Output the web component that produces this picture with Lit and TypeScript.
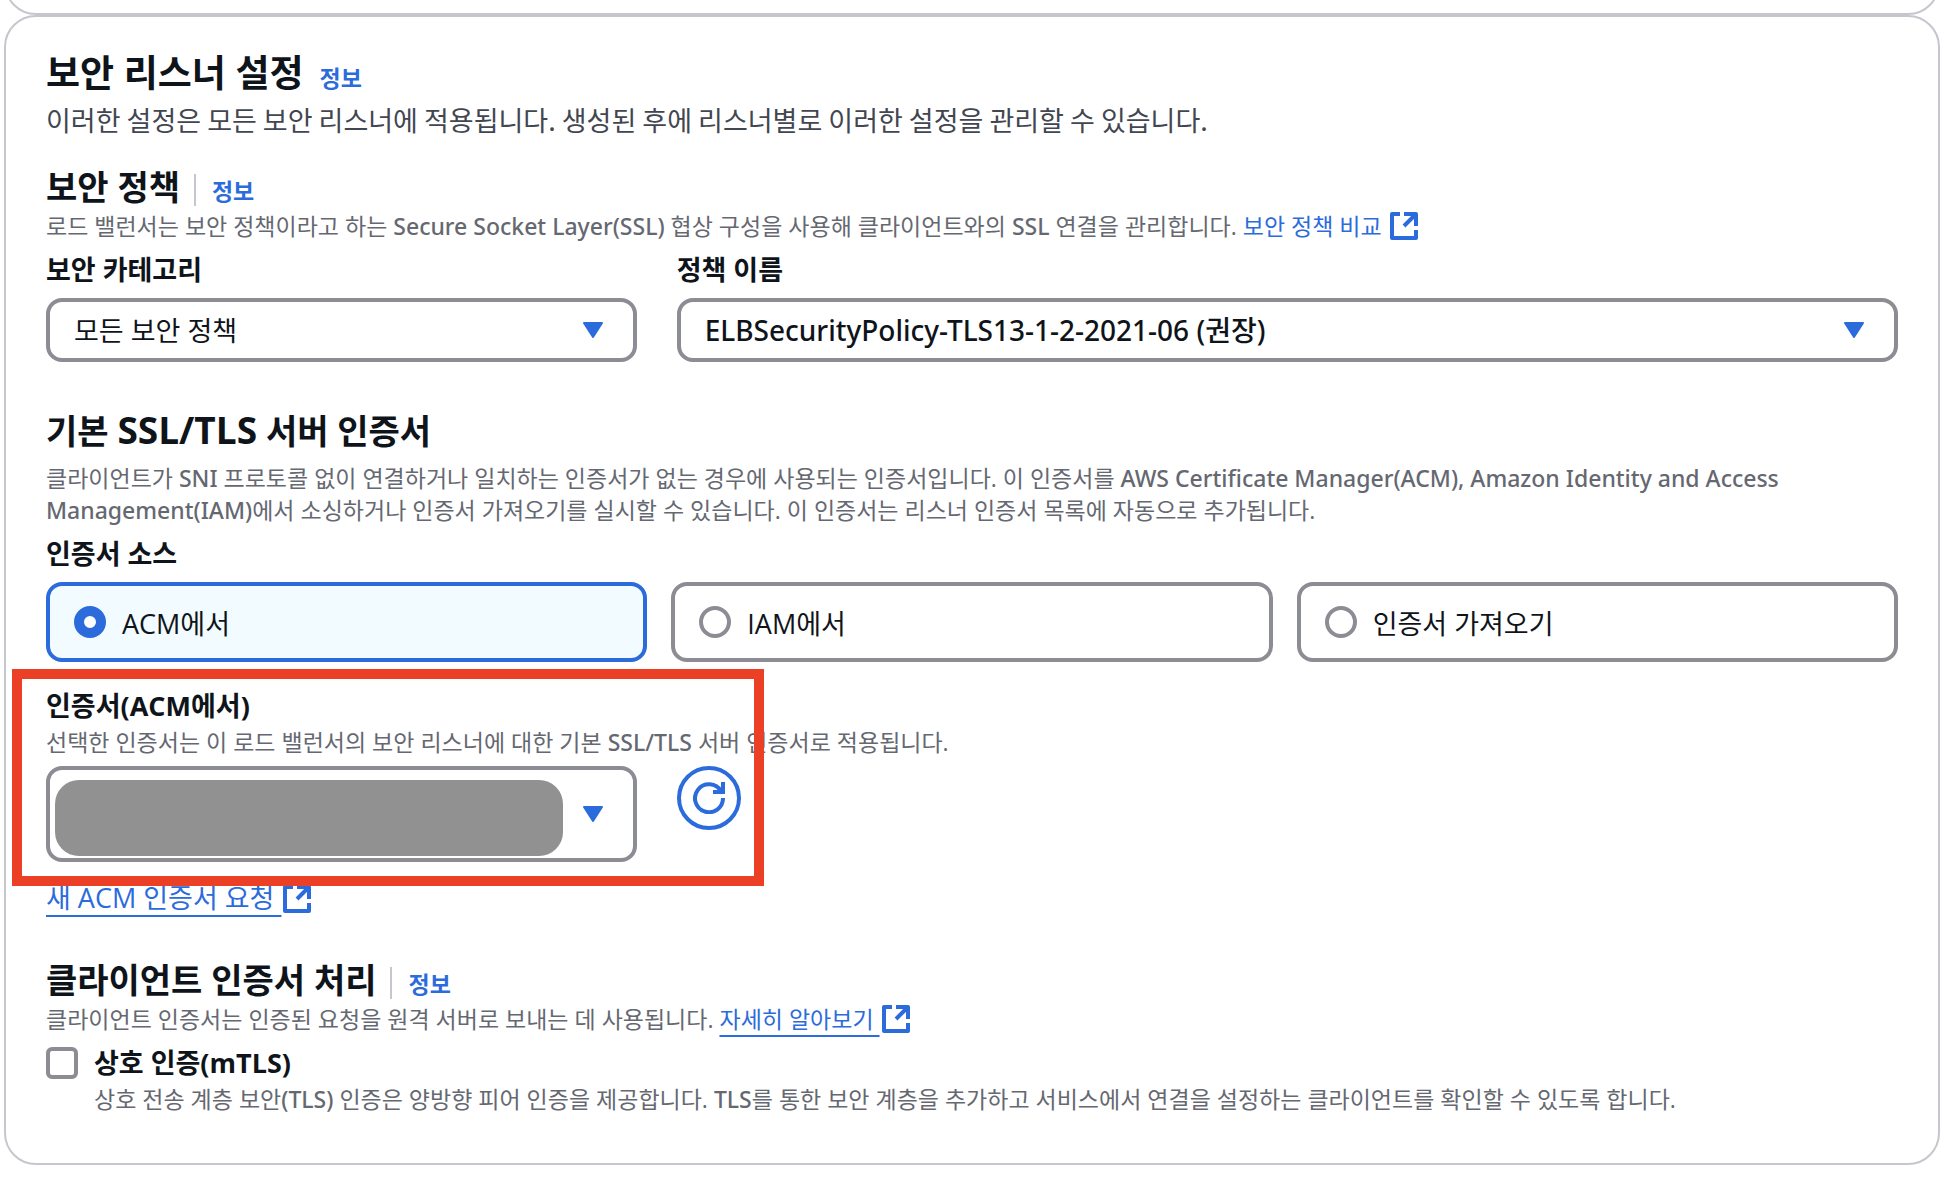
import { LitElement, html, css, svg } from "lit";
import { customElement, property, state } from "lit/decorators.js";

const caretIcon = html`<svg class="caret" width="20" height="16" viewBox="0 0 20 16" aria-hidden="true">
  ${svg`<path d="M1 1H19L10 15Z" fill="currentColor" stroke="currentColor" stroke-width="2" stroke-linejoin="round" />`}
</svg>`;

const externalIcon = html`<svg class="external" width="28" height="28" viewBox="0 0 28 28" aria-hidden="true">
  ${svg`<path d="M10 2H2V26H26V18M14 2H26V14M25 3L14 14" fill="none" stroke="currentColor" stroke-width="4" stroke-linejoin="round" />`}
</svg>`;

const refreshIcon = html`<svg width="32" height="32" viewBox="0 0 32 32" aria-hidden="true">
  ${svg`<path d="M30 16A14 14 0 1 1 28 9M30 0V10H20" fill="none" stroke="currentColor" stroke-width="4" />`}
</svg>`;

const shared = css`
  *,
  *::before {
    box-sizing: border-box;
  }
  a {
    color: #2c6bdb;
    text-decoration: none;
  }
`;

@customElement("section-heading")
class SectionHeading extends LitElement {
  @property({ type: Boolean }) info = false;

  static styles = [
    shared,
    css`
      :host {
        display: block;
      }
      .row {
        display: flex;
        align-items: flex-end;
        gap: 14px;
      }
      .title {
        margin: 0;
        font-size: 34px;
        line-height: 45px;
        font-weight: 700;
      }
      .info {
        display: flex;
        align-items: center;
        height: 32px;
        margin-bottom: 4px;
        padding-left: 16px;
        border-left: 2px solid #c6c6cd;
        font-size: 23px;
        font-weight: 700;
      }
    `,
  ];

  render() {
    return html`<div class="row">
      <h3 class="title"><slot></slot></h3>
      ${this.info ? html`<a class="info" href="#info">정보</a>` : ""}
    </div>`;
  }
}

@customElement("app-root")
class AppRoot extends LitElement {
  @state() private source = "acm";

  private sources = [
    { id: "acm", label: "ACM에서" },
    { id: "iam", label: "IAM에서" },
    { id: "import", label: "인증서 가져오기" },
  ];

  static styles = [
    shared,
    css`
      :host {
        display: block;
        color: #0f141a;
        font-family: "Open Sans", "Noto Sans CJK KR", sans-serif;
        font-size: 27px;
      }
      .page {
        padding: 0 16px 16px 4px;
      }
      .previous {
        display: flex;
        align-items: flex-end;
        height: 15px;
        overflow: hidden;
      }
      .previous-card {
        flex: 1 0 auto;
        height: 80px;
        border: 2px solid #c6c6cd;
        border-radius: 32px;
      }
      .card {
        padding: 32px 40px 48px;
        border: 2px solid #c6c6cd;
        border-radius: 32px;
      }
      .header {
        display: flex;
        align-items: baseline;
        gap: 16px;
      }
      .header-title {
        margin: 0;
        font-size: 37px;
        line-height: 48px;
      }
      .header-info {
        font-size: 23px;
        font-weight: 700;
      }
      .lead {
        margin: 3px 0 0;
        color: #424650;
        font-family: "Noto Sans CJK KR", "Open Sans", sans-serif;
        line-height: 40px;
      }
      .section {
        margin-top: 25px;
      }
      .section.certificates {
        margin-top: 47px;
      }
      .section.client {
        margin-top: 40px;
      }
      .hint {
        margin: 0;
        color: #656871;
        font-size: 23px;
        line-height: 32px;
      }
      .certificates > .hint {
        margin: 8px 0;
      }
      .latin {
        font-family: "Noto Sans", "Open Sans", sans-serif;
        font-weight: 500;
      }
      .heading-latin {
        font-size: 37px;
        line-height: 1;
      }
      .label {
        display: block;
        padding: 0;
        font-weight: 700;
        line-height: 40px;
      }
      .columns {
        display: grid;
        grid-template-columns: repeat(12, minmax(0, 1fr));
        gap: 40px;
      }
      .narrow {
        grid-column: span 4;
      }
      .broad {
        grid-column: span 8;
      }
      .field .label {
        margin: 8px 0;
      }
      .select {
        display: grid;
        align-items: center;
        position: relative;
      }
      .select-input {
        grid-area: 1 / 1;
        appearance: none;
        width: 100%;
        height: 64px;
        padding: 0 64px 0 24px;
        border: 4px solid #8c8c94;
        border-radius: 16px;
        background: #fff;
        color: inherit;
        font: inherit;
      }
      .select-input.code {
        font-family: "Noto Sans", "Noto Sans CJK KR", sans-serif;
        font-size: 28px;
        font-weight: 500;
      }
      .select-input.tall {
        height: 96px;
      }
      .caret {
        grid-area: 1 / 1;
        justify-self: end;
        margin-right: 34px;
        color: #2c6bdb;
        pointer-events: none;
      }
      .external {
        margin-left: 2px;
        vertical-align: -5px;
      }
      .underlined {
        text-decoration: underline;
        text-decoration-thickness: 2px;
        text-underline-offset: 7px;
      }
      .sources {
        margin: 0;
        padding: 0;
        border: 0;
      }
      .tiles {
        display: grid;
        grid-template-columns: repeat(3, minmax(0, 1fr));
        gap: 24px;
        margin-top: 8px;
      }
      .tile {
        display: flex;
        align-items: center;
        gap: 16px;
        height: 80px;
        padding: 0 24px;
        border: 4px solid #8c8c94;
        border-radius: 16px;
      }
      .tile.selected {
        border-color: #2c6bdb;
        background: #f2fbff;
      }
      .radio,
      .checkbox {
        appearance: none;
        flex: none;
        width: 32px;
        height: 32px;
        margin: 0;
        border: 4px solid #8c8c94;
        background: #fff;
      }
      .radio {
        border-radius: 50%;
      }
      .radio:checked {
        border: 10px solid #2c6bdb;
      }
      .checkbox {
        border-radius: 6px;
      }
      .certificate {
        position: relative;
        margin-top: 24px;
      }
      .certificate .columns {
        margin-top: 8px;
      }
      .highlight {
        position: absolute;
        top: -17px;
        left: -34px;
        width: 752px;
        height: 217px;
        border: 10px solid #eb4026;
        pointer-events: none;
      }
      .mask {
        position: absolute;
        top: 14px;
        bottom: 6px;
        left: 9px;
        right: 74px;
        border-radius: 24px;
        background: #919191;
        pointer-events: none;
      }
      .refresh {
        display: grid;
        place-items: center;
        width: 64px;
        height: 64px;
        padding: 0;
        border: 4px solid #2c6bdb;
        border-radius: 50%;
        background: #fff;
        color: #2c6bdb;
      }
      .request {
        display: block;
        margin-top: 16px;
        line-height: 40px;
      }
      .mutual {
        display: grid;
        grid-template-columns: auto 1fr;
        column-gap: 16px;
        align-items: center;
        margin-top: 8px;
      }
      .mutual .hint {
        grid-column: 2;
      }
    `,
  ];

  render() {
    return html`<div class="page">
      <div class="previous"><div class="previous-card"></div></div>
      <main class="card">
        <div class="header">
          <h2 class="header-title">보안 리스너 설정</h2>
          <a class="header-info" href="#info">정보</a>
        </div>
        <p class="lead">이러한 설정은 모든 보안 리스너에 적용됩니다. 생성된 후에 리스너별로 이러한 설정을 관리할 수 있습니다.</p>

        <section class="section">
          <section-heading info>보안 정책</section-heading>
          <p class="hint">
            로드 밸런서는 보안 정책이라고 하는 <span class="latin">Secure Socket Layer(SSL)</span> 협상 구성을 사용해 클라이언트와의
            <span class="latin">SSL</span> 연결을 관리합니다. <a href="#compare">보안 정책 비교&nbsp;${externalIcon}</a>
          </p>
          <div class="columns">
            <div class="field narrow">
              <label class="label" for="category">보안 카테고리</label>
              <div class="select">
                <select id="category" class="select-input">
                  <option>모든 보안 정책</option>
                </select>
                ${caretIcon}
              </div>
            </div>
            <div class="field broad">
              <label class="label" for="policy">정책 이름</label>
              <div class="select">
                <select id="policy" class="select-input code">
                  <option>ELBSecurityPolicy-TLS13-1-2-2021-06 (권장)</option>
                </select>
                ${caretIcon}
              </div>
            </div>
          </div>
        </section>

        <section class="section certificates">
          <section-heading>기본 <span class="heading-latin">SSL/TLS</span> 서버 인증서</section-heading>
          <p class="hint">
            클라이언트가 <span class="latin">SNI</span> 프로토콜 없이 연결하거나 일치하는 인증서가 없는 경우에 사용되는 인증서입니다. 이 인증서를
            <span class="latin">AWS Certificate Manager(ACM), Amazon Identity and Access</span>
            <span class="latin">Management(IAM)</span>에서 소싱하거나 인증서 가져오기를 실시할 수 있습니다. 이 인증서는 리스너 인증서 목록에
            자동으로 추가됩니다.
          </p>
          <fieldset class="sources">
            <legend class="label">인증서 소스</legend>
            <div class="tiles">
              ${this.sources.map(
                (s) => html`<label class="tile ${this.source === s.id ? "selected" : ""}">
                  <input
                    class="radio"
                    type="radio"
                    name="source"
                    .checked=${this.source === s.id}
                    @change=${() => (this.source = s.id)}
                  />
                  <span>${s.label}</span>
                </label>`
              )}
            </div>
          </fieldset>

          <div class="certificate">
            <label class="label" for="certificate">인증서(ACM에서)</label>
            <p class="hint">
              선택한 인증서는 이 로드 밸런서의 보안 리스너에 대한 기본 <span class="latin">SSL/TLS</span> 서버 인증서로 적용됩니다.
            </p>
            <div class="columns">
              <div class="select narrow">
                <select id="certificate" class="select-input tall"></select>
                ${caretIcon}
                <div class="mask"></div>
              </div>
              <button class="refresh" type="button" aria-label="새로 고침">${refreshIcon}</button>
            </div>
            <div class="request">
              <a href="#request"><span class="underlined">새 ACM 인증서 요청&nbsp;</span>${externalIcon}</a>
            </div>
            <div class="highlight"></div>
          </div>
        </section>

        <section class="section client">
          <section-heading info>클라이언트 인증서 처리</section-heading>
          <p class="hint">
            클라이언트 인증서는 인증된 요청을 원격 서버로 보내는 데 사용됩니다.
            <a href="#learn"><span class="underlined">자세히 알아보기&nbsp;</span>${externalIcon}</a>
          </p>
          <div class="mutual">
            <input id="mtls" class="checkbox" type="checkbox" />
            <label class="label" for="mtls">상호 인증(mTLS)</label>
            <p class="hint">
              상호 전송 계층 보안<span class="latin">(TLS)</span> 인증은 양방향 피어 인증을 제공합니다.
              <span class="latin">TLS</span>를 통한 보안 계층을 추가하고 서비스에서 연결을 설정하는 클라이언트를 확인할 수 있도록 합니다.
            </p>
          </div>
        </section>
      </main>
    </div>`;
  }
}
